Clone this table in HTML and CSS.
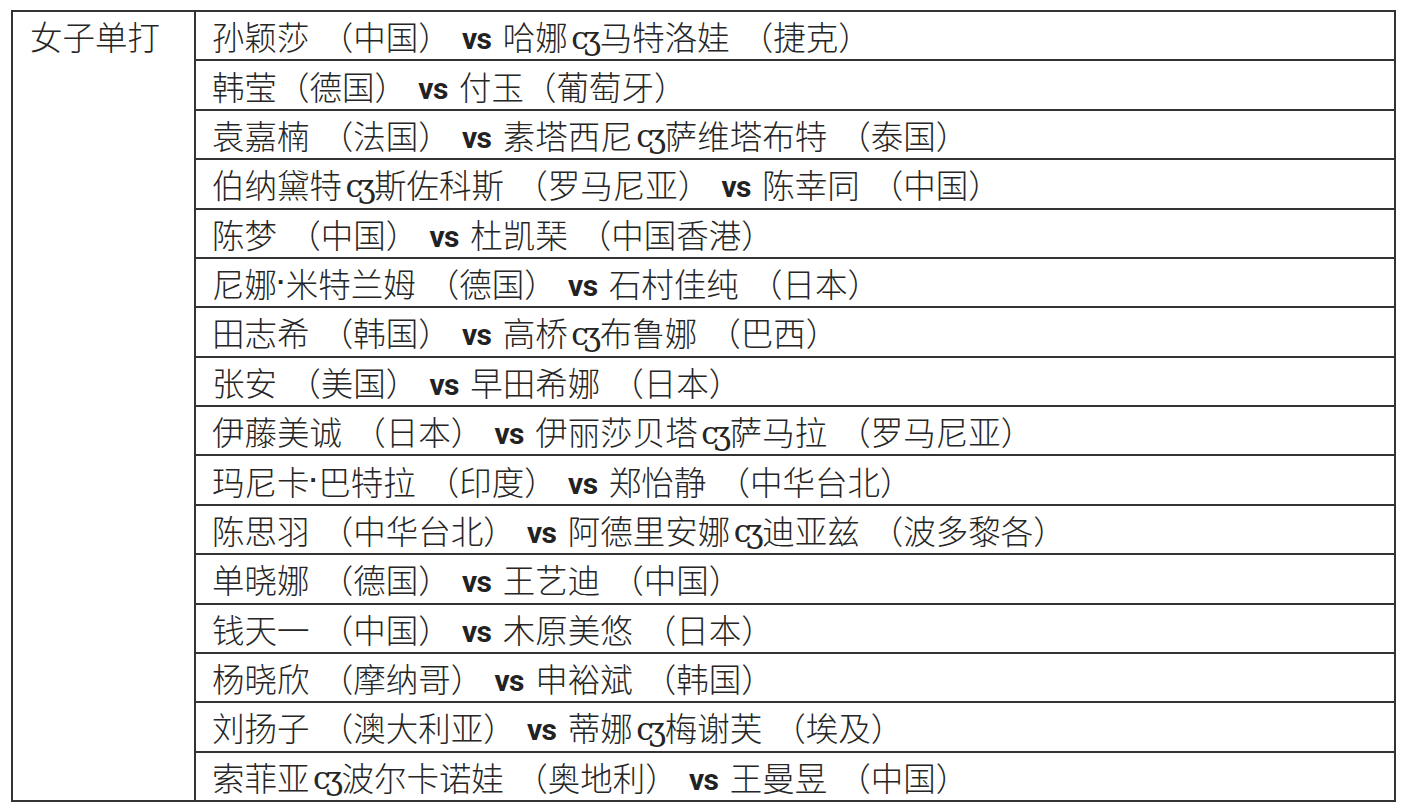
FILE: index.html
```html
<!DOCTYPE html>
<html lang="zh">
<head>
<meta charset="utf-8">
<title>女子单打</title>
<link rel="stylesheet" href="styles.css">
</head>
<body>
<div class="table">
  <div class="cat">女子单打</div>
  <div class="rows">
    <div class="row">孙颖莎 （中国） <b class="vs">vs</b> 哈娜<span class="sep">cʒ</span>马特洛娃 （捷克）</div>
    <div class="row">韩莹（德国） <b class="vs">vs</b> 付玉（葡萄牙）</div>
    <div class="row">袁嘉楠 （法国） <b class="vs">vs</b> 素塔西尼<span class="sep">cʒ</span>萨维塔布特 （泰国）</div>
    <div class="row">伯纳黛特<span class="sep">cʒ</span>斯佐科斯 （罗马尼亚） <b class="vs">vs</b> 陈幸同 （中国）</div>
    <div class="row">陈梦 （中国） <b class="vs">vs</b> 杜凯琹 （中国香港）</div>
    <div class="row">尼娜<span class="dot">·</span>米特兰姆 （德国） <b class="vs">vs</b> 石村佳纯 （日本）</div>
    <div class="row">田志希 （韩国） <b class="vs">vs</b> 高桥<span class="sep">cʒ</span>布鲁娜 （巴西）</div>
    <div class="row">张安 （美国） <b class="vs">vs</b> 早田希娜 （日本）</div>
    <div class="row">伊藤美诚 （日本） <b class="vs">vs</b> 伊丽莎贝塔<span class="sep">cʒ</span>萨马拉 （罗马尼亚）</div>
    <div class="row">玛尼卡<span class="dot">·</span>巴特拉 （印度） <b class="vs">vs</b> 郑怡静 （中华台北）</div>
    <div class="row">陈思羽 （中华台北） <b class="vs">vs</b> 阿德里安娜<span class="sep">cʒ</span>迪亚兹 （波多黎各）</div>
    <div class="row">单晓娜 （德国） <b class="vs">vs</b> 王艺迪 （中国）</div>
    <div class="row">钱天一 （中国） <b class="vs">vs</b> 木原美悠 （日本）</div>
    <div class="row">杨晓欣 （摩纳哥） <b class="vs">vs</b> 申裕斌 （韩国）</div>
    <div class="row">刘扬子 （澳大利亚） <b class="vs">vs</b> 蒂娜<span class="sep">cʒ</span>梅谢芙 （埃及）</div>
    <div class="row">索菲亚<span class="sep">cʒ</span>波尔卡诺娃 （奥地利） <b class="vs">vs</b> 王曼昱 （中国）</div>
  </div>
</div>
</body>
</html>
```

FILE: styles.css
```css
html, body {
  margin: 0;
  padding: 0;
  background: #ffffff;
}

body {
  padding: 10px 0 0 11px;
  font-family: "Noto Sans CJK SC", "Liberation Sans", sans-serif;
  font-weight: 300;
  color: #262626;
}

.table {
  display: grid;
  grid-template-columns: 183px 1fr;
  width: 1385px;
  height: 792px;
  box-sizing: border-box;
  border: 2px solid #333333;
}

.cat {
  border-right: 2px solid #333333;
  padding: 0 0 0 17px;
  font-size: 32.5px;
  line-height: 47px;
  white-space: nowrap;
}

.rows {
  display: flex;
  flex-direction: column;
}

.row {
  flex: 1;
  display: flex;
  align-items: center;
  padding-left: 16px;
  font-size: 32.5px;
  white-space: pre;
  word-spacing: 4px;
  border-top: 2px solid #333333;
}

.row:first-child {
  border-top: none;
}

.vs {
  font-family: Roboto, "Liberation Sans", sans-serif;
  font-weight: 700;
  font-size: 30px;
  letter-spacing: -0.5px;
  color: #222222;
  position: relative;
  top: 3px;
}

.sep {
  display: inline-block;
  width: 32px;
  font-family: "DejaVu Serif", serif;
  font-weight: 400;
  font-size: 31px;
  letter-spacing: -5px;
  text-align: center;
  color: #262626;
  position: relative;
  top: 2px;
}

.dot {
  font-family: "Liberation Sans", sans-serif;
  font-weight: 700;
  font-size: 26px;
}
```
